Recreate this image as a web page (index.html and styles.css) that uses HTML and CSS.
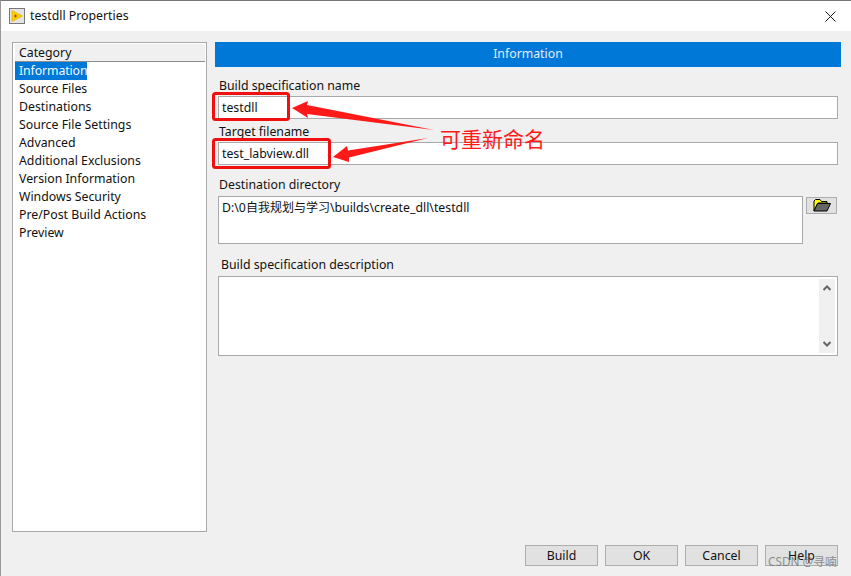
FILE: index.html
```html
<!DOCTYPE html>
<html lang="en">
<head>
<meta charset="utf-8">
<title>testdll Properties</title>
<link rel="stylesheet" href="styles.css">
</head>
<body>
<div class="window">
  <header class="titlebar">
    <svg class="app-icon" viewBox="0 0 16 16" width="16" height="16">
      <rect x="0.5" y="0.5" width="15" height="15" fill="#e4e4e4" stroke="#777"/>
      <path d="M3 2.5 L13.5 8 L3 13.5 Z" fill="#ffcc00" stroke="#e0a800" stroke-width="0.6"/>
      <path d="M5 8h3M6.5 6.5v3" stroke="#7a5a00" stroke-width="1"/>
    </svg>
    <span class="title">testdll Properties</span>
    <svg class="close" viewBox="0 0 11 11" width="11" height="11">
      <path d="M0.5 0.5 L10.5 10.5 M10.5 0.5 L0.5 10.5" stroke="#111" stroke-width="1" fill="none"/>
    </svg>
  </header>
  <div class="content">
    <div class="main">
      <aside class="category">
        <div class="category-head">Category</div>
        <ul class="category-list">
          <li><span class="selected">Information</span></li>
          <li>Source Files</li>
          <li>Destinations</li>
          <li>Source File Settings</li>
          <li>Advanced</li>
          <li>Additional Exclusions</li>
          <li>Version Information</li>
          <li>Windows Security</li>
          <li>Pre/Post Build Actions</li>
          <li>Preview</li>
        </ul>
      </aside>
      <section class="panel">
        <div class="panel-head">Information</div>
        <div class="label l-build">Build specification name</div>
        <div class="field f-line">testdll</div>
        <div class="label l-target">Target filename</div>
        <div class="field f-line">test_labview.dll</div>
        <div class="label l-dest">Destination directory</div>
        <div class="dest-row">
          <div class="field f-dest">D:\0<span class="cjk">自我规划与学习</span>\builds\create_dll\testdll</div>
          <div class="browse">
            <svg viewBox="0 0 18 13" width="18" height="13">
              <path d="M1 12 V2 L2.5 0.5 H7 L8.5 2.5 H14 V4 H5 L1 12 Z" fill="#ffff00" stroke="#000" stroke-width="1"/>
              <path d="M1 12 L4.5 4.5 H17.5 L14 12 Z" fill="#666" stroke="#000" stroke-width="1"/>
            </svg>
          </div>
        </div>
        <div class="label l-desc">Build specification description</div>
        <div class="field f-desc">
          <div class="scrollbar">
            <svg viewBox="0 0 8 6" width="8" height="6"><path d="M0.5 5 L4 1.5 L7.5 5" fill="none" stroke="#666" stroke-width="2"/></svg>
            <svg viewBox="0 0 8 6" width="8" height="6"><path d="M0.5 1 L4 4.5 L7.5 1" fill="none" stroke="#666" stroke-width="2"/></svg>
          </div>
        </div>
      </section>
    </div>
    <footer class="actions">
      <div class="btn">Build</div>
      <div class="btn">OK</div>
      <div class="btn">Cancel</div>
      <div class="btn">Help</div>
    </footer>
  </div>
  <svg class="markup" viewBox="0 0 851 576" width="851" height="576">
    <rect x="213.5" y="93.5" width="75" height="26" rx="2" fill="none" stroke="#f01010" stroke-width="3"/>
    <rect x="213.5" y="139.5" width="116" height="28" rx="2" fill="none" stroke="#f01010" stroke-width="3"/>
    <path d="M292 108 L308 101 L307 105 L434 130 L307 114 L308 118 Z" fill="#ff1a1a"/>
    <path d="M333 157 L347 146 L348 150.5 L428 138 L349 157.5 L349 162 Z" fill="#ff1a1a"/>
  </svg>
  <div class="note">可重新命名</div>
  <div class="watermark">CSDN @寻喃</div>
</div>
</body>
</html>
```
FILE: styles.css
```css
* { box-sizing: border-box; }
html, body { margin: 0; padding: 0; }
body {
  width: 851px;
  height: 576px;
  overflow: hidden;
  font-family: "Noto Sans", "Noto Sans CJK SC", sans-serif;
  font-size: 12.3px;
  color: #111;
}
.window {
  position: relative;
  width: 851px;
  height: 576px;
  background: #f0f0f0;
  border-top: 1px solid #777;
  border-left: 1px solid #999;
  display: flex;
  flex-direction: column;
}
.titlebar {
  height: 30px;
  flex: none;
  background: #fff;
  display: flex;
  align-items: center;
  padding: 0 15px 0 8px;
}
.app-icon { flex: none; }
.title { margin-left: 5px; flex: 1; line-height: 30px; }
.close { flex: none; margin-top: 1px; }
.content {
  flex: 1;
  display: flex;
  flex-direction: column;
  padding: 11px 10px 10px 11px;
}
.main { flex: 1; display: flex; gap: 8px; }
.category {
  width: 195px;
  height: 490px;
  flex: none;
  background: #fff;
  border: 1px solid #a9a9ad;
  padding: 1px 1px 0 2px;
}
.category-head {
  height: 18px;
  line-height: 17px;
  padding-left: 4px;
  background: #f0f0f0;
  border-bottom: 1px solid #8c8c8c;
}
.category-list { list-style: none; margin: 0; padding: 0; }
.category-list li { height: 18px; line-height: 18px; padding-left: 4px; white-space: nowrap; }
.selected {
  display: inline-block;
  background: #0078d7;
  color: #f4f8fc;
  margin-left: -4px;
  padding-left: 4px;
  letter-spacing: -0.1px;
}
.panel { flex: 1; min-width: 0; }
.panel-head {
  height: 25px;
  line-height: 24px;
  background: #0078d7;
  color: #e4eef8;
  text-align: center;
}
.label { line-height: 17px; height: 17px; margin-left: 4px; }
.l-build { margin-top: 10px; }
.l-target { margin-top: 4px; }
.l-dest { margin-top: 11px; }
.l-desc { margin-top: 12px; margin-left: 6px; }
.field {
  background: #fff;
  border: 1px solid #a9a9ad;
  margin-left: 3px;
  margin-right: 3px;
  padding-left: 3px;
}
.f-line { height: 23px; line-height: 21px; margin-top: 2px; }
.dest-row { display: flex; align-items: flex-start; margin-top: 3px; }
.f-dest { width: 585px; height: 48px; margin-right: 3px; line-height: 22px; flex: none; }
.cjk { font-size: 12px; }
.browse {
  width: 31px;
  height: 17px;
  margin-top: 1px;
  background: #e1e1e1;
  border: 1px solid #adadad;
  display: flex;
  align-items: center;
  justify-content: center;
}
.f-desc {
  height: 80px;
  margin-top: 3px;
  padding: 2px;
  display: flex;
  justify-content: flex-end;
}
.scrollbar {
  width: 16px;
  background: #f0f0f0;
  display: flex;
  flex-direction: column;
  align-items: center;
  justify-content: space-between;
  padding: 6px 0;
}
.actions { display: flex; justify-content: flex-end; gap: 7px; padding-right: 3px; }
.btn {
  width: 73px;
  height: 21px;
  line-height: 19px;
  text-align: center;
  background: #e1e1e1;
  border: 1px solid #adadad;
}
.markup { position: absolute; left: -1px; top: -1px; pointer-events: none; }
.note {
  position: absolute;
  left: 439px;
  top: 124px;
  font-family: "Noto Sans CJK SC", sans-serif;
  font-size: 21px;
  line-height: 26px;
  color: #ff1a1a;
}
.watermark {
  position: absolute;
  left: 767px;
  top: 552px;
  font-size: 11.8px;
  line-height: 16px;
  color: rgba(110, 110, 110, 0.75);
}
```
